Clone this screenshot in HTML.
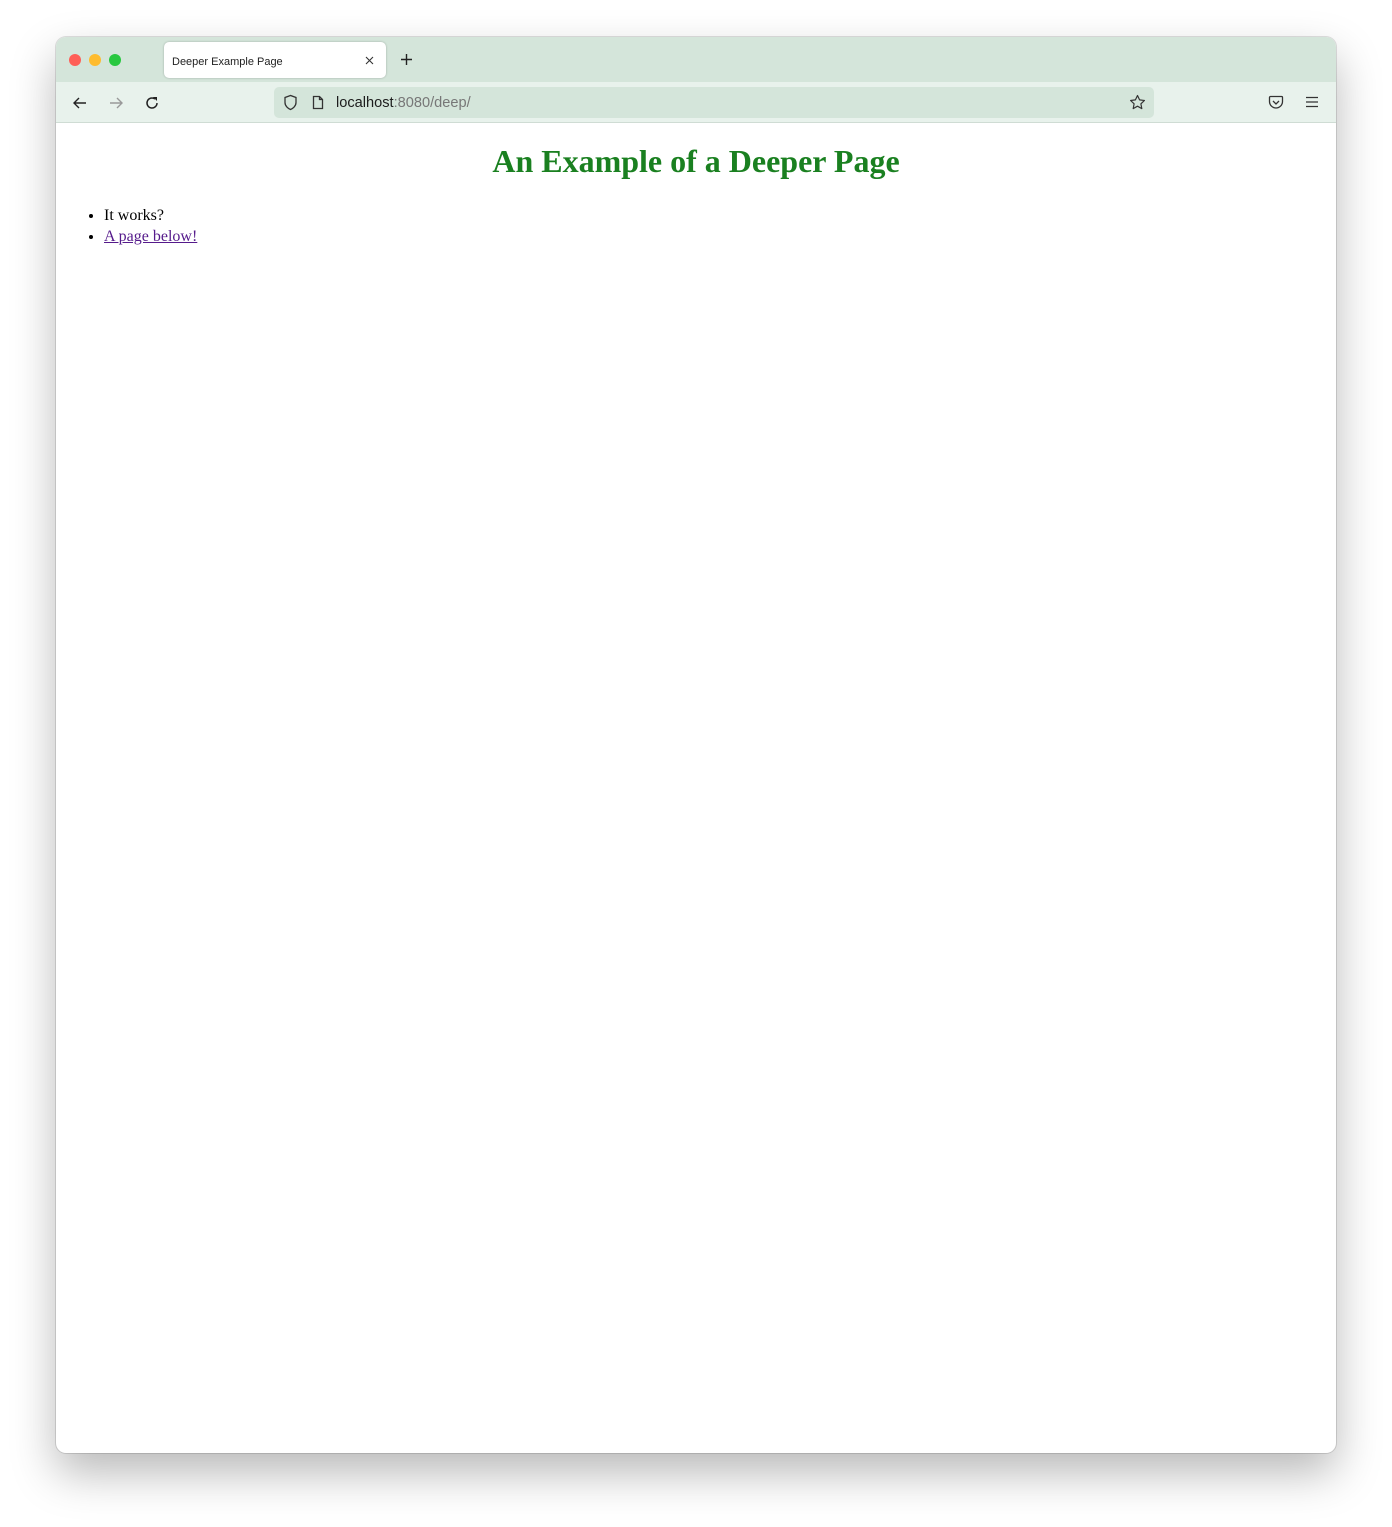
<!DOCTYPE html>
<html><head><meta charset="utf-8"><style>
*{box-sizing:border-box;margin:0;padding:0}
html,body{width:1392px;height:1527px;background:#fff;overflow:hidden}
.win{position:absolute;left:56px;top:37px;width:1280px;height:1416px;border-radius:10px;overflow:hidden;background:#fff;box-shadow:0 20px 45px rgba(0,0,0,.28),0 0 0 1px rgba(0,0,0,.12)}
.tabs{position:absolute;left:0;top:0;width:100%;height:45px;background:#d4e5da}
.dot{position:absolute;top:17px;width:12px;height:12px;border-radius:50%}
.tab{position:absolute;left:108px;top:5px;width:222px;height:36px;background:#fff;border-radius:5px;box-shadow:0 0 2px rgba(0,0,0,.25);font:11px "Liberation Sans",sans-serif;color:#222;padding:14px 0 0 8px}
.tb{position:absolute;left:0;top:45px;width:100%;height:41px;background:#e8f2ec;border-bottom:1px solid #cfdcd4}
.url{position:absolute;left:218px;top:5px;width:880px;height:31px;background:#d4e5da;border-radius:5px}
.url span{position:absolute;left:62px;top:8px;font:14.6px "Liberation Sans",sans-serif;color:#1c1c1c}
svg{position:absolute}
h1{position:absolute;left:0;top:106px;width:100%;text-align:center;font:bold 32px "Liberation Serif",serif;color:#1a8020}
ul{position:absolute;left:48px;top:168px;font:16px "Liberation Serif",serif;line-height:21px;list-style:disc}
a{color:#551a8b}
</style></head><body>
<div class="win">
<div class="tabs">
<div class="dot" style="left:13px;background:#fe5f57"></div>
<div class="dot" style="left:33px;background:#febc2e"></div>
<div class="dot" style="left:53px;background:#28c840"></div>
<div class="tab">Deeper Example Page
<svg style="left:201px;top:14px" width="9" height="9" viewBox="0 0 9 9"><path d="M1 1L8 8M8 1L1 8" stroke="#333" stroke-width="1.1"/></svg></div>
<svg style="left:344px;top:16px" width="13" height="13" viewBox="0 0 13 13"><path d="M6.5 1v11M1 6.5h11" stroke="#222" stroke-width="1.4"/></svg>
</div>
<div class="tb">
<svg style="left:16px;top:13px" width="16" height="16" viewBox="0 0 16 16"><path d="M14 8H2M7 3L2 8l5 5" fill="none" stroke="#222" stroke-width="1.4"/></svg>
<svg style="left:52px;top:13px" width="16" height="16" viewBox="0 0 16 16"><path d="M2 8h12M9 3l5 5-5 5" fill="none" stroke="#999" stroke-width="1.4"/></svg>
<svg style="left:88px;top:13px" width="16" height="16" viewBox="0 0 16 16"><path d="M13 8A5 5 0 1 1 11 4" fill="none" stroke="#222" stroke-width="1.5"/><path d="M9 2h4v4z" fill="#222"/></svg>
<div class="url">
<svg style="left:9px;top:7px" width="15" height="17" viewBox="0 0 15 17"><path d="M7.5 1.5L2 3.5v5c0 3.5 3 6 5.5 7 2.5-1 5.5-3.5 5.5-7v-5z" fill="none" stroke="#333" stroke-width="1.3"/></svg>
<svg style="left:38px;top:8px" width="12" height="15" viewBox="0 0 12 15"><path d="M1.5 1.5h6l3 3v9h-9z M7.5 1.5v3h3" fill="none" stroke="#333" stroke-width="1.3"/></svg>
<span>localhost<span style="position:static;color:#777">:8080/deep/</span></span>
<svg style="left:855px;top:7px" width="17" height="17" viewBox="0 0 17 17"><path d="M8.5 1.5l2.1 4.4 4.8.6-3.5 3.3.9 4.8-4.3-2.4-4.3 2.4.9-4.8L1.6 6.5l4.8-.6z" fill="none" stroke="#333" stroke-width="1.2" stroke-linejoin="round"/></svg>
</div>
<svg style="left:1212px;top:13px" width="16" height="15" viewBox="0 0 16 15"><path d="M2.5 1.5h11a1 1 0 0 1 1 1v4a6.5 6.5 0 0 1-13 0v-4a1 1 0 0 1 1-1z" fill="none" stroke="#333" stroke-width="1.3"/><path d="M5 6l3 3 3-3" fill="none" stroke="#333" stroke-width="1.3"/></svg>
<svg style="left:1249px;top:14px" width="14" height="12" viewBox="0 0 14 12"><path d="M1 1.5h12M1 6h12M1 10.5h12" stroke="#333" stroke-width="1.3"/></svg>
</div>
<h1>An Example of a Deeper Page</h1>
<ul><li>It works?</li><li><a href="#">A page below!</a></li></ul>
</div>
</body></html>
